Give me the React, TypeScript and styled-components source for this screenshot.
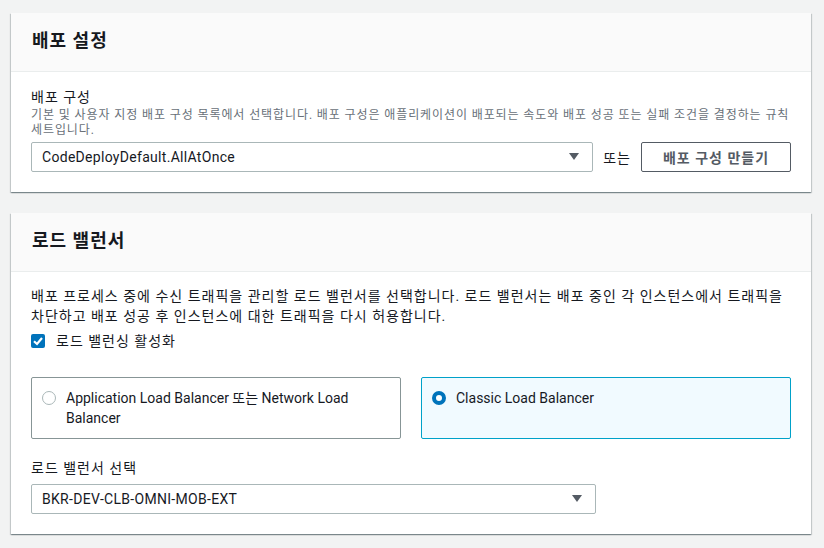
import React from 'react';
import styled, {createGlobalStyle} from "styled-components";

const GlobalStyle = createGlobalStyle`
  body {
    margin: 0;
    background: #f2f3f3;
    font-family: Roboto, "Noto Sans CJK KR", sans-serif;
    font-size: 14px;
    color: #16191f;
  }
`

const ChevronDown = () => (
    <svg width="10" height="8" viewBox="0 0 10 8">
        <polygon points="0,0 10,0 5,7" fill="#545b64"/>
    </svg>
)

const CheckMark = () => (
    <svg width="14" height="14" viewBox="0 0 14 14">
        <polyline points="3,7.2 6,10 11,4" fill="none" stroke="#fff" strokeWidth="2.2"/>
    </svg>
)

export default function App() {
    return (
        <>
            <GlobalStyle/>
            <Page>
                <Card>
                    <CardHeader>배포 설정</CardHeader>
                    <CardBody>
                        <Label>배포 구성</Label>
                        <Description>
                            기본 및 사용자 지정 배포 구성 목록에서 선택합니다. 배포 구성은 애플리케이션이 배포되는 속도와 배포 성공 또는 실패 조건을 결정하는 규칙 세트입니다.
                        </Description>
                        <SelectRow>
                            <Select grow>
                                <span>CodeDeployDefault.AllAtOnce</span>
                                <ChevronDown/>
                            </Select>
                            <OrText>또는</OrText>
                            <Button>배포 구성 만들기</Button>
                        </SelectRow>
                    </CardBody>
                </Card>

                <Card>
                    <CardHeader>로드 밸런서</CardHeader>
                    <CardBody>
                        <BodyText>
                            배포 프로세스 중에 수신 트래픽을 관리할 로드 밸런서를 선택합니다. 로드 밸런서는 배포 중인 각 인스턴스에서 트래픽을 차단하고 배포 성공 후 인스턴스에 대한 트래픽을 다시 허용합니다.
                        </BodyText>
                        <CheckRow>
                            <CheckBox><CheckMark/></CheckBox>
                            <span>로드 밸런싱 활성화</span>
                        </CheckRow>
                        <Tiles>
                            <Tile>
                                <Radio/>
                                <TileText>Application Load Balancer 또는 Network Load Balancer</TileText>
                            </Tile>
                            <Tile selected>
                                <Radio selected/>
                                <TileText>Classic Load Balancer</TileText>
                            </Tile>
                        </Tiles>
                        <FieldLabel>로드 밸런서 선택</FieldLabel>
                        <Select width={565}>
                            <span>BKR-DEV-CLB-OMNI-MOB-EXT</span>
                            <ChevronDown/>
                        </Select>
                    </CardBody>
                </Card>
            </Page>
        </>
    );
}

const Page = styled.div`
  padding: 13px 13px 14px 11px;
  display: flex;
  flex-direction: column;
  gap: 21px;
`
const Card = styled.div`
  width: 800px;
  background: #fff;
  box-shadow: 0 1px 1px 0 rgba(0, 28, 36, .3), 1px 1px 1px 0 rgba(0, 28, 36, .15), -1px 1px 1px 0 rgba(0, 28, 36, .15);
`
const CardHeader = styled.div`
  background: #fafafa;
  border-bottom: 1px solid #eaeded;
  padding: 17px 21px 19px;
  font-size: 18px;
  line-height: 22px;
  font-weight: 700;
  letter-spacing: 1px;
`
const CardBody = styled.div`
  padding: 14px 20px 20px;
`
const Label = styled.div`
  margin-top: 1px;
  line-height: 20px;
  letter-spacing: 1px;
`
const Description = styled.div`
  margin-top: 1px;
  font-size: 12px;
  line-height: 15px;
  color: #687078;
  letter-spacing: 0.9px;
`
const SelectRow = styled.div`
  display: flex;
  align-items: center;
  margin-top: 4px;
`
const Select = styled.div<{ grow?: boolean; width?: number }>`
  box-sizing: border-box;
  height: 30px;
  ${p => p.grow ? 'flex: 1;' : ''}
  ${p => p.width ? `width: ${p.width}px;` : ''}
  display: flex;
  align-items: center;
  justify-content: space-between;
  padding: 0 13px 0 10px;
  border: 1px solid #aab7b8;
  border-radius: 2px;
  background: #fff;
  letter-spacing: 0.3px;
`
const OrText = styled.span`
  margin: 0 10px;
  letter-spacing: 1px;
`
const Button = styled.div`
  box-sizing: border-box;
  width: 150px;
  height: 30px;
  display: flex;
  align-items: center;
  justify-content: center;
  border: 1px solid #545b64;
  border-radius: 2px;
  color: #545b64;
  font-weight: 700;
  letter-spacing: 1px;
`
const BodyText = styled.div`
  line-height: 20px;
  letter-spacing: 1px;
`
const CheckRow = styled.div`
  display: flex;
  align-items: center;
  gap: 11px;
  margin-top: 5px;
  line-height: 20px;
  letter-spacing: 1px;
`
const CheckBox = styled.div`
  width: 14px;
  height: 14px;
  border-radius: 2px;
  background: #0073bb;
  display: flex;
`
const Tiles = styled.div`
  display: grid;
  grid-template-columns: 1fr 1fr;
  gap: 20px;
  margin-top: 26px;
`
const Tile = styled.div<{ selected?: boolean }>`
  display: flex;
  align-items: flex-start;
  gap: 10px;
  padding: 10px 16px 10px 10px;
  border: 1px solid ${p => p.selected ? '#00a1c9' : '#879596'};
  background: ${p => p.selected ? '#f1faff' : '#fff'};
  border-radius: 2px;
`
const Radio = styled.div<{ selected?: boolean }>`
  flex: none;
  box-sizing: border-box;
  width: 14px;
  height: 14px;
  margin-top: 3px;
  border-radius: 50%;
  border: ${p => p.selected ? '4px solid #0073bb' : '1px solid #aab7b8'};
  background: #fff;
`
const TileText = styled.div`
  line-height: 20px;
`
const FieldLabel = styled.div`
  margin-top: 19px;
  line-height: 20px;
  margin-bottom: 6px;
  letter-spacing: 1px;
`
